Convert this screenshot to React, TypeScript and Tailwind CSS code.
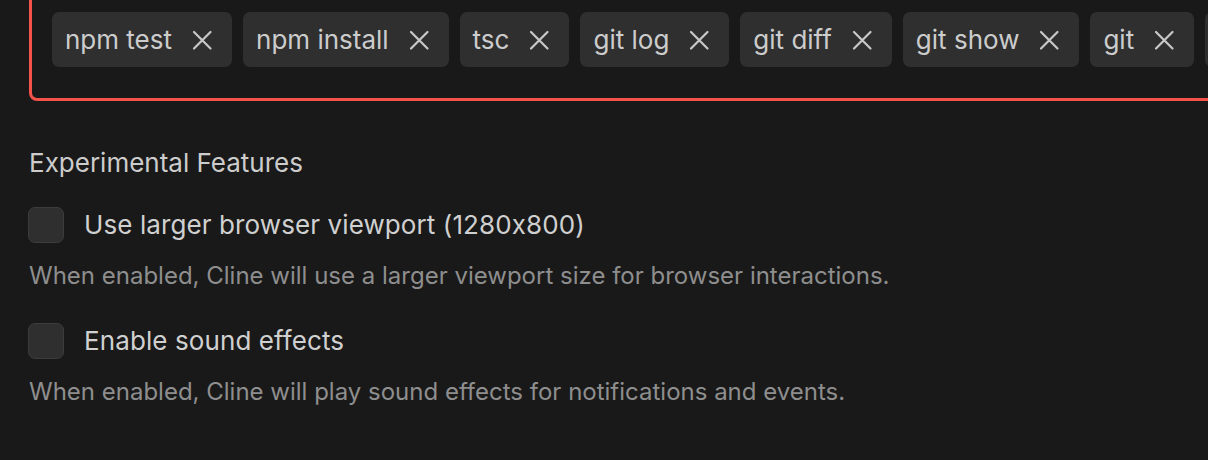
import { ReactElement } from "react";

const commands = ["npm test", "npm install", "tsc", "git log", "git diff", "git show", "git"];

const CloseIcon = (): ReactElement => (
  <svg width="32" height="32" viewBox="0 0 32 32" className="shrink-0">
    <path d="M8 8 L24.5 24.5 M24.5 8 L8 24.5" stroke="#c8c8c8" strokeWidth="2.2" strokeLinecap="round" />
  </svg>
);

const Chip = ({ label }: { label: string }): ReactElement => (
  <div className="flex h-[55px] shrink-0 items-center rounded-[7px] bg-[#2f2f2f] pl-[13px] pr-[14px]">
    <span className="whitespace-nowrap text-[26px] text-[#cccccc]">{label}</span>
    <span className="ml-[14px] flex">
      <CloseIcon />
    </span>
  </div>
);

interface OptionProps {
  label: string;
  description: string;
  className?: string;
}

const Option = ({ label, description, className }: OptionProps): ReactElement => (
  <div className={className}>
    <label className="flex h-9 items-center gap-5">
      <span className="-ml-px block h-9 w-9 rounded-[7px] border border-[#3c3c3c] bg-[#2f2f2f]" />
      <span className="text-[26px] leading-[36px] tracking-[0.1px] text-[#d0d0d0]">{label}</span>
    </label>
    <p className="mt-[18px] text-[24px] leading-[30px] text-[#8e8e8e]">{description}</p>
  </div>
);

const App = (): ReactElement => {
  return (
    <div
      className="h-[460px] w-[1208px] overflow-hidden bg-[#191919] pl-[29px] [font-feature-settings:'calt'_0]"
      style={{ fontFamily: "Inter, 'Noto Sans', sans-serif" }}
    >
      <div className="-mt-5 w-[1400px] rounded-[8px] border-[3px] border-[#f5524a] pb-[31px] pl-5 pt-[29px]">
        <div className="flex gap-[11px]">
          {commands.map((c) => (
            <Chip key={c} label={c} />
          ))}
          {/* next chip, scrolled out of view */}
          <div className="h-[55px] w-24 shrink-0 rounded-[7px] bg-[#2f2f2f]" />
        </div>
      </div>

      <h2 className="mt-[47px] text-[26px] leading-[30px] text-[#cccccc]">Experimental Features</h2>

      <Option
        className="mt-[29px]"
        label="Use larger browser viewport (1280x800)"
        description="When enabled, Cline will use a larger viewport size for browser interactions."
      />
      <Option
        className="mt-[32px]"
        label="Enable sound effects"
        description="When enabled, Cline will play sound effects for notifications and events."
      />
    </div>
  );
};

export default App;
